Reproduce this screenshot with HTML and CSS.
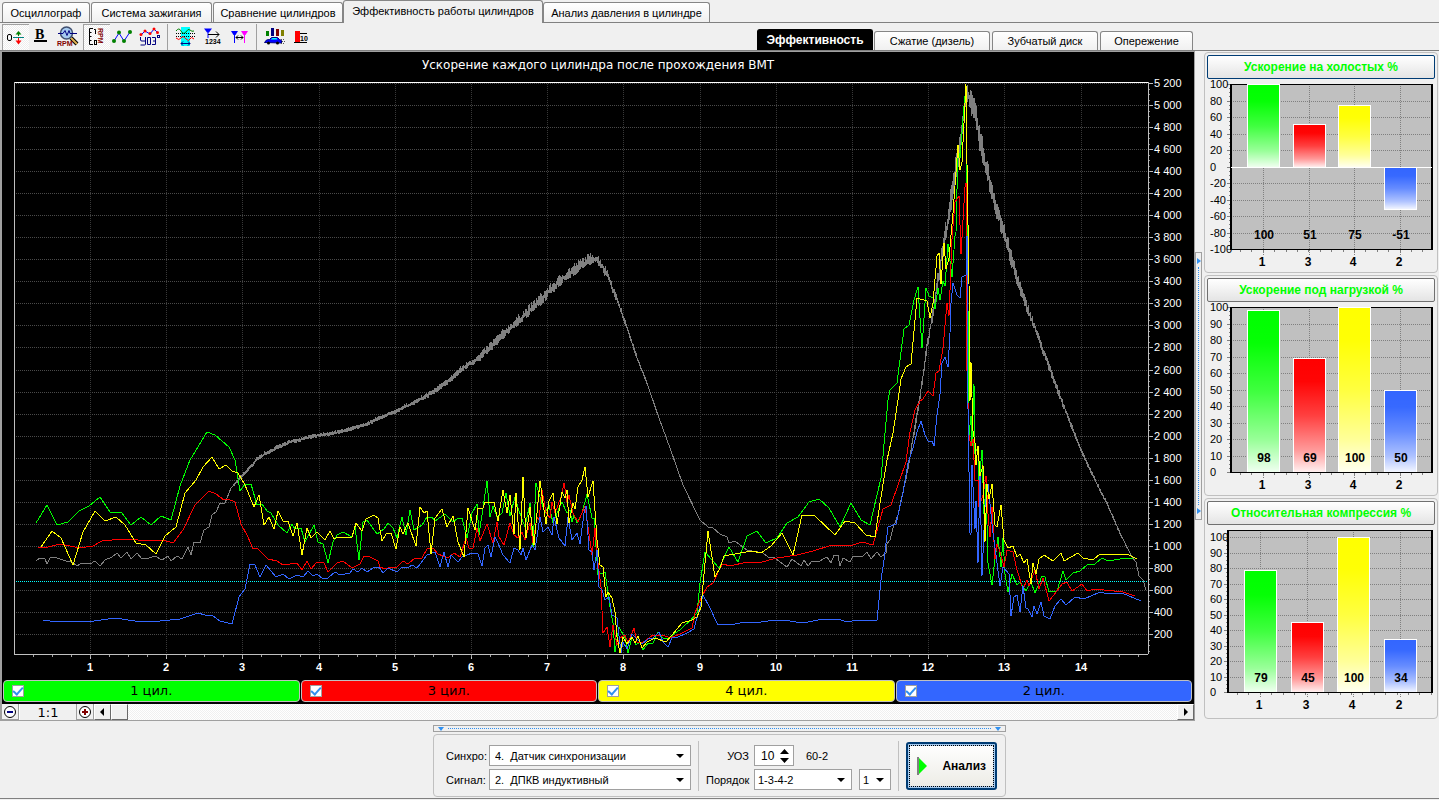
FILE: index.html
```html
<!DOCTYPE html>
<html lang="ru">
<head>
<meta charset="utf-8">
<title>Эффективность работы цилиндров</title>
<link rel="stylesheet" href="styles.css">
</head>
<body>
<nav class="tabs main-tabs">
  <button class="tab t-osc">Осциллограф</button>
  <button class="tab t-ign">Система зажигания</button>
  <button class="tab t-cmp">Сравнение цилиндров</button>
  <button class="tab t-eff active">Эффективность работы цилиндров</button>
  <button class="tab t-prs">Анализ давления в цилиндре</button>
</nav>

<header class="toolbar">
  <div class="tools">
    <button class="tool pressed" aria-label="Ноль"><svg viewBox="0 0 27 26"><rect x="5.500" y="10.500" width="4" height="6" rx="1.500" fill="none" stroke="#000"/><path d="M11 13.500h11" stroke="#008080"/><path d="M16.500 8v4" stroke="#008000"/><path d="M13.500 10.500h6l-3-3.500z" fill="#008000"/><path d="M16.500 14v4" stroke="red"/><path d="M13.500 16.500h6l-3 4z" fill="red"/></svg></button>
    <button class="tool" aria-label="Толщина"><svg viewBox="0 0 27 26"><text x="6" y="15" class="ico-b">B</text><path d="M5 17h13" stroke="#000" stroke-width="2"/></svg></button>
    <button class="tool" aria-label="Поиск RPM"><svg viewBox="0 0 27 26"><path d="M15 14l6 6" stroke="#000" stroke-width="4"/><path d="M15 14l6 6" stroke="#e0b050" stroke-width="2"/><circle cx="10.500" cy="9" r="6" fill="#a6caf0" stroke="#405070" stroke-width="1.500"/><path d="M2 9.500h5l2-3 2 5 2-5 1 3h7" stroke="#000080" fill="none"/><text x="1" y="22" class="ico-s maroon">RPM</text></svg></button>
    <button class="tool pressed" aria-label="Шкала RPM"><svg viewBox="0 0 27 26"><path d="M10 4.500H6.500v16H10M6.500 8.500h2M6.500 12.500h2M6.500 16.500h2" stroke="#000" fill="none"/><path d="M11 5.500h1.500V10" stroke="#000" fill="none"/><rect x="11.500" y="16.500" width="2" height="4" fill="none" stroke="#000"/><text transform="translate(15 4) rotate(90)" class="ico-s maroon">RPM</text></svg></button>
    <button class="tool" aria-label="Точки"><svg viewBox="0 0 27 26"><path d="M4 17l5-8 5 8 6-9" stroke="#00f" fill="none"/><g fill="#008000"><circle cx="4" cy="17" r="2"/><circle cx="9" cy="8.500" r="2"/><circle cx="14" cy="17" r="2"/><circle cx="20" cy="8" r="2"/></g></svg></button>
    <button class="tool" aria-label="УОЗ"><svg viewBox="0 0 27 26"><path d="M4 11l4-4 5 3 4-5 4 4" stroke="#00f" fill="none"/><g fill="red"><circle cx="4" cy="10.500" r="1.500"/><circle cx="8" cy="7" r="1.500"/><circle cx="13" cy="9.500" r="1.500"/><circle cx="17" cy="5" r="1.500"/><circle cx="20.500" cy="8.500" r="1.500"/></g><path d="M3.500 13v3q0 1 1.500 1h3M8.500 13v7q0 1-1 1h-4M10.500 13.500h3v7h-3zM15 13.500h3.500v7H15M16 17h2.500" stroke="#000080" fill="none"/><rect x="20.500" y="11.500" width="2" height="2" fill="none" stroke="#000080"/></svg></button>
    <span class="sep"></span>
    <button class="tool" aria-label="Фаза"><svg viewBox="0 0 27 26"><rect x="9" y="3" width="9" height="19" fill="#0ff"/><path d="M4 7q3-4 5 0t5 1q2-4 4-2t4 1" stroke="#008000" fill="none"/><path d="M4 9.500h19M4 12.500h19" stroke="#000" stroke-dasharray="1 1"/><path d="M4 14q3 3 5 0t5 1q3 3 4 0t4 0" stroke="red" fill="none"/><path d="M9 19.500h9M11 17.500l-2 2 2 2M16 17.500l2 2-2 2" stroke="#000080" fill="none"/></svg></button>
    <button class="tool" aria-label="Порядок цилиндров"><svg viewBox="0 0 27 26"><path d="M5 4.500h8l-3 4h-2z" fill="#00f"/><path d="M9 5v9" stroke="#00f"/><path d="M9 10.500h11M17 7.500l3 3-3 3" stroke="#000" fill="none"/><text x="6" y="20" class="ico-s">1234</text></svg></button>
    <button class="tool" aria-label="Интервал"><svg viewBox="0 0 27 26"><path d="M5 7h7l-2.500 4h-2z" fill="#00f"/><path d="M8.500 9v10" stroke="#00f"/><path d="M15 7h7l-2.500 4h-2z" fill="#f0f"/><path d="M18.500 9v10" stroke="#f0f"/><path d="M10 13.500h7M12 11.500l-2 2 2 2M15 11.500l2 2-2 2" stroke="#000" fill="none"/></svg></button>
    <span class="sep"></span>
    <button class="tool" aria-label="Автомобиль"><svg viewBox="0 0 27 26"><rect x="5" y="7" width="3" height="5" fill="#008000"/><rect x="10" y="4" width="3" height="8" fill="#000080"/><rect x="15" y="5" width="3" height="7" fill="#800000"/><rect x="20" y="6" width="3" height="6" fill="#808000"/><path d="M3.500 18.500l2-2.500 3-.5 2-2h6l2 2 2 1v2.500z" fill="#00f" stroke="#000080"/><path d="M9.500 15.500l2-1.500h4l1 1.500z" fill="#0ff"/><circle cx="7.500" cy="19" r="1.500"/><circle cx="16.500" cy="19" r="1.500"/><path d="M20 15.500h4M21 17.500h3M20 19.500h4" stroke="#555" stroke-dasharray="1 1"/></svg></button>
    <button class="tool" aria-label="Уровень"><svg viewBox="0 0 27 26"><rect x="7" y="7" width="5" height="11" fill="red"/><path d="M6 18.500h13M12 9.500h7" stroke="#000"/><text x="12" y="17" class="ico-s">10</text></svg></button>
  </div>
  <nav class="tabs sub-tabs">
    <button class="tab s-eff black">Эффективность</button>
    <button class="tab s-dsl">Сжатие (дизель)</button>
    <button class="tab s-dsk">Зубчатый диск</button>
    <button class="tab s-adv">Опережение</button>
  </nav>
</header>

<main class="workspace">
  <section class="plot-pane">
    <svg class="plot" id="plot" viewBox="2 52 1192 627" shape-rendering="crispEdges">
      <text x="598" y="69" class="plot-title">Ускорение каждого цилиндра после прохождения ВМТ</text>
    </svg>
    <div class="legend">
      <label class="key green"><input type="checkbox" checked><span>1 цил.</span></label>
      <label class="key red"><input type="checkbox" checked><span>3 цил.</span></label>
      <label class="key yellow"><input type="checkbox" checked><span>4 цил.</span></label>
      <label class="key blue"><input type="checkbox" checked><span>2 цил.</span></label>
    </div>
    <div class="scrollrow">
      <button class="zoom-btn" aria-label="Уменьшить"><svg viewBox="0 0 16 16"><circle cx="8" cy="8" r="5.500" fill="#fff" stroke="#000"/><path d="M5 8h6" stroke="#000080" stroke-width="2"/></svg></button>
      <span class="ratio">1:1</span>
      <button class="zoom-btn" aria-label="Увеличить"><svg viewBox="0 0 16 16"><circle cx="8" cy="8" r="5.500" fill="#fff" stroke="#000"/><path d="M5 8h6M8 5v6" stroke="#800000" stroke-width="2"/></svg></button>
      <button class="raised" aria-label="Влево"><svg viewBox="0 0 16 16"><path d="M9 3v8L5 7z"/></svg></button>
      <span class="raised thumb"></span>
      <span class="track"></span>
      <button class="raised" aria-label="Вправо"><svg viewBox="0 0 16 16"><path d="M6 3v8l4-4z"/></svg></button>
    </div>
  </section>

  <div class="vsplit"><div class="vgrip"><i></i><b></b><i></i></div></div>

  <aside class="bars">
    <section class="card"><button class="bar-btn focus">Ускорение на холостых %</button><svg class="bar-chart" id="idle" viewBox="1205 79 232 193" shape-rendering="crispEdges"></svg></section>
    <section class="card"><button class="bar-btn">Ускорение под нагрузкой %</button><svg class="bar-chart" id="load" viewBox="1205 302 232 193" shape-rendering="crispEdges"></svg></section>
    <section class="card"><button class="bar-btn">Относительная компрессия %</button><svg class="bar-chart" id="comp" viewBox="1205 525 232 193" shape-rendering="crispEdges"></svg></section>
  </aside>
</main>

<footer class="bottom">
  <div class="dock">
    <div class="hgrip"><i></i><b></b><i></i></div>
    <form class="panel">
      <div class="fields source">
        <label for="sync">Синхро:</label>
        <span class="pick"><select id="sync"><option>4.&nbsp; Датчик синхронизации</option></select></span>
        <label for="signal">Сигнал:</label>
        <span class="pick"><select id="signal"><option>2.&nbsp; ДПКВ индуктивный</option></select></span>
      </div>
      <span class="rule"></span>
      <div class="fields order">
        <label for="uoz" class="right">УОЗ</label>
        <div class="line"><span class="spin"><input id="uoz" type="text" value="10"><svg viewBox="0 0 9 14"><path d="M4.500 0L9 5H0zM0 9h9l-4.500 5z"/></svg></span><span class="disk">60-2</span></div>
        <label for="order">Порядок</label>
        <div class="line"><span class="pick seq"><select id="order"><option>1-3-4-2</option></select></span><span class="pick first"><select aria-label="Первый цилиндр"><option>1</option></select></span></div>
      </div>
      <span class="rule"></span>
      <button type="button" class="analyze"><svg viewBox="0 0 11 20"><path d="M1 1l9 9-9 9z" fill="#0f0"/><path d="M1 1v18" stroke="#808080" stroke-width="2"/></svg>Анализ</button>
    </form>
  </div>
</footer>
<script src="charts.js"></script>
</body>
</html>
```
FILE: styles.css
```css
* { box-sizing: border-box; }
body {
  margin: 0;
  min-height: 100vh;
  display: flex;
  flex-direction: column;
  background: #f0f0f0;
  color: #000;
  font: 12px/14px "Liberation Sans", Arial, sans-serif;
}
button, input, select { font: inherit; color: inherit; margin: 0; }
button { padding: 0; border: 0; background: none; white-space: nowrap; }
svg { display: block; }

.tabs { display: flex; align-items: flex-end; }
.tab {
  height: 20px;
  border: 1px solid #868686;
  border-bottom: 0;
  border-radius: 3px 3px 0 0;
  background: linear-gradient(#fff, #f0f0f0);
  font-size: 11px;
}
.main-tabs { height: 23px; padding-left: 2px; border-bottom: 1px solid #808080; }
.main-tabs .tab { height: 20px; }
.main-tabs .tab.active { height: 23px; background: #f0f0f0; margin-bottom: -1px; padding-bottom: 2px; }
.t-osc { width: 88px; margin-right: 1px; }
.t-ign { width: 121px; margin-right: 1px; }
.t-cmp { width: 130px; }
.t-eff { width: 200px; }
.t-prs { width: 167px; }

.toolbar { display: flex; justify-content: space-between; align-items: flex-end; height: 27px; padding: 0 246px 0 2px; }
.tools { display: flex; align-self: stretch; padding-top: 1px; }
.tool { width: 27px; height: 26px; }
.tool svg { width: 27px; height: 26px; }
.pressed { background: repeating-conic-gradient(#fff 0 25%, #eee 0 50%) 0 0 / 2px 2px; box-shadow: inset 1px 1px #a0a0a0; }
.sep { width: 8px; height: 26px; border-right: 4px solid transparent; box-shadow: inset -1px 0 #a0a0a0; }
.ico-b { font: bold 14px "Liberation Serif", serif; }
.ico-s { font: bold 7px "Liberation Sans", sans-serif; }
.maroon { fill: #800000; }
.sub-tabs { gap: 2px; }
.sub-tabs .tab { height: 19px; }
.sub-tabs .tab.black { height: 21px; background: #000; color: #fff; font-weight: bold; font-size: 12px; border-color: #000; margin-right: -1px; }
.s-eff { width: 116px; }
.s-dsl { width: 116px; }
.s-dsk { width: 106px; }
.s-adv { width: 93px; }

.workspace { display: flex; flex: 1; border-top: 1px solid #808080; }
.plot-pane {
  flex: 1;
  min-width: 0;
  display: flex;
  flex-direction: column;
  border: solid #a0a0a0;
  border-width: 1px 1px 1px 2px;
}
.plot { width: 100%; flex: 1; background: #000; }
.plot-title { font: 12px "DejaVu Sans", Verdana, sans-serif; fill: #fff; text-anchor: middle; }
.y-label { font: 11px "Liberation Sans", Arial, sans-serif; fill: #fff; }
.x-label { font: bold 11px "Liberation Sans", Arial, sans-serif; fill: #fff; text-anchor: middle; }
.legend { display: flex; gap: 1px; padding: 1px 2px 2px 1px; background: #000; }
.key {
  flex: 1;
  height: 22px;
  display: flex;
  align-items: center;
  padding: 0 8px;
  border: 1px solid #c0c0c0;
  border-radius: 4px;
  font: 13px/16px "DejaVu Sans", Verdana, sans-serif;
}
.key span { flex: 1; text-align: center; padding-right: 12px; }
.key input { appearance: none; width: 12px; height: 12px; border: 1px solid #a0a0a0; background: #fff; display: grid; place-items: center; }
.key input:checked::after { content: ""; width: 8px; height: 4px; border: solid #3090f0; border-width: 0 0 2px 2px; transform: rotate(-48deg); margin-bottom: 3px; }
.green { background: #0f0; }
.red { background: #f00; }
.yellow { background: #ff0; }
.blue { background: #36f; }

.scrollrow { display: flex; height: 16px; background: #f0f0f0; }
.scrollrow svg { width: 16px; height: 16px; }
.zoom-btn { width: 17px; border-right: 1px solid #a0a0a0; border-bottom: 1px solid #a0a0a0; }
.ratio { width: 58px; text-align: center; font: 13px/18px "DejaVu Sans", Verdana, sans-serif; overflow: hidden; border-right: 1px solid #a0a0a0; border-left: 1px solid #fff; }
.raised { width: 17px; border: 1px solid #fff; border-right-color: #696969; border-bottom-color: #696969; background: #f0f0f0; }
.track { flex: 1; background: repeating-conic-gradient(#fff 0 25%, #f0f0f0 0 50%) 0 0 / 2px 2px; }

.vsplit { width: 9px; display: flex; align-items: center; padding-bottom: 1px; }
.vgrip { width: 7px; height: 268px; border: 1px solid #a0a0a0; display: flex; flex-direction: column; align-items: center; padding: 5px 0; gap: 3px; }
.vgrip i { border: 3px solid transparent; border-left: 4px solid #3090f0; border-right: 0; }
.vgrip b { flex: 1; border-left: 1px dotted #3090f0; }

.bars { width: 235px; display: flex; flex-direction: column; gap: 2px; padding: 1px 1px 2px 0; }
.card { flex: 1; display: flex; flex-direction: column; border: 1px solid #c0c0c0; border-radius: 4px; padding: 2px 0 0; }
.bar-btn {
  height: 24px;
  margin: 0 2px;
  border: 1px solid #707070;
  border-radius: 2px;
  background: linear-gradient(#fff, #e4e4e4);
  color: #0f0;
  font-weight: bold;
  font-size: 12px;
}
.bar-btn.focus { border-color: #003c74; }
.bar-chart { width: 100%; flex: 1; }
.scale { font: 11px "Liberation Sans", Arial, sans-serif; }
.value { font: bold 12px "Liberation Sans", Arial, sans-serif; text-anchor: middle; }

.bottom { display: flex; justify-content: center; height: 78px; border-bottom: 1px solid #808080; margin-bottom: 1px; }
.dock { width: 573px; display: flex; flex-direction: column; gap: 2px; padding: 4px 0 1px; }
.hgrip { height: 7px; border: 1px solid #a0a0a0; display: flex; align-items: center; padding: 0 4px; gap: 4px; }
.hgrip i { border: 3px solid transparent; border-top: 4px solid #3090f0; border-bottom: 0; }
.hgrip b { flex: 1; border-top: 1px dotted #3090f0; }
.panel { flex: 1; display: flex; align-items: center; border: 1px solid #c0c0c0; border-radius: 4px; padding: 0 7px 0 12px; font-size: 11px; }
.fields { display: grid; row-gap: 3px; align-items: center; padding-top: 4px; }
.source { grid-template-columns: 43px 202px; }
.order { grid-template-columns: 48px 137px; }
.right { text-align: right; padding-right: 5px; }
.line { display: flex; align-items: center; gap: 7px; }
.rule { width: 1px; height: 50px; background: #c0c0c0; margin: 0 7px; }
.pick { position: relative; display: block; height: 21px; }
.pick select { appearance: none; width: 100%; height: 100%; border: 1px solid #a0a0a0; border-radius: 0; background: #fff; padding: 0 5px; }
.pick::after { content: ""; position: absolute; right: 7px; top: 9px; border: 4px solid transparent; border-top: 4px solid #000; border-bottom: 0; }
.seq { width: 98px; }
.first { width: 32px; }
.order select { padding: 0 3px; }
.spin { display: flex; align-items: center; width: 40px; height: 21px; background: #fff; border: 1px solid #a0a0a0; padding-right: 4px; font-size: 12px; }
.spin input { width: 100%; min-width: 0; border: 0; padding: 0 0 0 6px; background: none; }
.spin svg { flex: none; width: 9px; height: 14px; }
.disk { padding-left: 5px; }
.analyze {
  width: 91px;
  height: 48px;
  display: flex;
  align-items: center;
  justify-content: space-between;
  padding: 0 9px;
  border: 2px solid #003c74;
  border-radius: 3px;
  background: linear-gradient(#fff, #ecebe5);
  box-shadow: inset 0 0 0 2px #a8ccf0;
  outline: 1px dotted #000;
  outline-offset: -4px;
  font-weight: bold;
  font-size: 12px;
}
.analyze svg { width: 11px; height: 20px; }
```
FILE: charts.js
```js
const NS = "http://www.w3.org/2000/svg";

function add(parent, name, attrs, text) {
  const el = document.createElementNS(NS, name);
  for (const key in attrs) el.setAttribute(key, attrs[key]);
  if (text !== undefined) el.textContent = text;
  parent.appendChild(el);
  return el;
}
function line(parent, x1, y1, x2, y2, stroke, dash) {
  const attrs = { x1, y1, x2, y2, stroke };
  if (dash) attrs["stroke-dasharray"] = dash;
  add(parent, "line", attrs);
}

/* ---------- acceleration plot ---------- */
const plot = document.getElementById("plot");
const left = 14, right = 1148, top_ = 82, bottom = 654;
const yOf = v => Math.round(634 - (v - 200) * 0.1102);
const xOf = n => Math.round(90 + (n - 1) * 76.2);

for (let v = 200; v <= 5200; v += 200) {
  line(plot, left, yOf(v) + .5, right, yOf(v) + .5, "#4a4a4a", "1 1");
  line(plot, right, yOf(v) + .5, right + 5, yOf(v) + .5, "#c0c0c0");
  const s = String(v);
  add(plot, "text", { x: 1154, y: yOf(v) + 4, class: "y-label" }, s.length > 3 ? s[0] + " " + s.slice(1) : s);
}
for (let v = 50; v < 5200; v += 50) line(plot, right, yOf(v) + .5, right + 2, yOf(v) + .5, "#909090");
for (let n = 1; n <= 14; n++) {
  line(plot, xOf(n) + .5, top_, xOf(n) + .5, bottom, "#383838", "1 1");
  line(plot, xOf(n) + .5, bottom, xOf(n) + .5, bottom + 5, "#c0c0c0");
  add(plot, "text", { x: xOf(n), y: 671, class: "x-label" }, n);
}
for (let n = .25; n < 15; n += .25) line(plot, xOf(n) + .5, bottom, xOf(n) + .5, bottom + 3, "#a0a0a0");
line(plot, left, 581.5, right, 581.5, "#00ffff", "1 1");

/* x, y, half height of the noise band */
const speed = [36,561,0,40,558,0,45,559,0,47,564,0,50,558,0,54,557,0,60,559,0,66,561,0,72,562,0,77,566,0,82,563,0,90,564,0,95,561,0,100,566,0,105,560,0,112,557,0,117,553,0,121,558,0,127,552,0,131,559,0,137,553,0,142,559,0,149,558,0,155,556,0,162,560,0,168,556,0,171,561,0,177,556,0,182,559,0,188,547,0,191,555,0,194,542,0,200,543,0,204,530,0,209,527,0,212,515,0,216,512,0,220,503,0,225,503,0,231,488,0,236,483,2,241,477,2,246,472,2,252,465,2,258,458,2,264,455,2,270,451,2,280,446,2,290,442,2,300,440,2,310,437,2,320,435,2,335,433,2,350,429,2,365,425,2,380,418,2,397,411,2,413,403,2,430,394,3,447,382,3,463,368,4,480,357,4,497,340,5,513,325,5,530,310,6,547,293,6,563,278,6,580,265,6,592,258,6,598,260,5,608,275,5,618,302,4,627,327,2,637,357,2,647,383,1,657,412,1,670,448,0,683,485,0,700,520,0,708,527,0,713,528,0,720,534,0,727,537,0,729,543,0,735,541,0,747,550,0,763,553,0,768,557,0,775,558,0,780,562,0,787,567,0,792,559,0,801,566,0,804,560,0,808,566,0,812,561,0,818,562,0,827,557,0,831,563,0,834,555,0,838,555,0,840,566,0,843,558,0,850,562,0,853,556,0,862,557,0,867,552,0,871,559,0,877,552,0,881,557,0,886,553,0,887,544,0,890,540,0,893,528,0,898,515,0,901,500,2,907,473,3,913,437,4,920,396,4,927,345,5,933,311,7,940,266,9,947,224,11,953,187,13,960,141,14,966,98,12,968,92,8,975,113,13,983,153,13,993,194,11,1007,243,9,1023,296,6,1040,341,4,1053,377,4,1067,414,3,1082,452,2,1100,490,1,1107,503,1,1120,533,1,1132,557,0,1136,562,0,1139,576,0,1143,580,0,1146,590,0];
let seed = 7;
const noise = () => (seed = (seed * 16807) % 2147483647) / 2147483647;
const pts = [];
for (let i = 0; i + 3 < speed.length; i += 3) {
  const [x1, y1, a1, x2, y2, a2] = speed.slice(i, i + 6);
  const step = a1 + a2 > 0 ? .5 : x2 - x1;
  for (let x = x1; x < x2; x += step) {
    const t = (x - x1) / (x2 - x1), amp = a1 + (a2 - a1) * t;
    const side = pts.length % 2 ? 1 : -1;
    pts.push(x + "," + (y1 + (y2 - y1) * t + side * amp * (.1 + noise())).toFixed(1));
  }
}
pts.push("1146,590");
add(plot, "polyline", { points: pts.join(" "), fill: "none", stroke: "#808080" });

const series = {
  "#00ff00": "36,523 47,505 57,525 68,522 79,511 89,506 100,497 110,512 121,512 131,525 141,517 151,525 161,516 171,520 180,486 190,460 207,432 215,435 229,447 235,460 240,491 245,484 251,484 257,505 262,504 267,511 271,513 278,525 287,533 292,524 295,529 301,528 305,542 314,525 318,542 323,544 328,563 333,542 337,535 343,532 352,537 355,527 359,560 363,522 367,520 377,534 384,529 388,523 393,528 397,538 402,517 406,535 410,510 414,530 422,525 427,517 432,517 435,521 445,514 453,522 458,518 462,518 467,538 472,513 477,504 479,535 487,481 490,517 493,506 497,517 502,513 506,493 510,516 515,497 518,508 525,527 530,503 533,547 536,483 540,497 545,513 549,505 553,523 557,513 562,502 567,513 570,510 572,522 574,515 577,523 582,513 587,494 592,518 594,518 598,575 605,572 610,607 613,623 615,652 619,627 625,638 628,653 632,637 636,645 640,642 643,650 648,643 653,643 658,632 663,638 670,638 675,633 680,630 685,625 690,621 697,613 700,583 705,552 712,560 719,568 729,547 738,562 747,536 757,531 766,543 777,538 787,523 798,517 809,502 819,499 829,508 840,527 851,503 861,520 870,525 881,478 888,400 890,390 897,383 904,329 909,325 914,300 918,287 922,348 926,288 929,296 933,298 935,309 938,288 940,300 943,281 945,286 948,244 952,277 955,236 956,232 958,147 960,158 964,106 966,87 967,183 968,311 969,435 971,416 972,446 974,384 975,454 978,446 979,484 982,450 984,514 986,484 988,563 992,585 995,559 998,537 1001,567 1003,538 1005,574 1008,592 1012,574 1017,585 1020,582 1026,591 1031,582 1035,593 1042,576 1045,577 1049,592 1057,591 1063,571 1066,580 1073,573 1080,571 1087,565 1095,564 1102,558 1108,561 1120,559 1133,558",
  "#ff0000": "38,547 48,547 60,544 80,548 93,546 102,541 112,540 133,539 138,540 163,540 173,543 183,530 195,505 209,491 216,494 224,500 228,499 235,502 241,524 248,537 253,549 257,548 268,559 277,561 283,565 297,563 302,570 307,561 311,569 317,562 324,563 328,572 337,563 343,561 352,568 360,564 364,556 370,557 378,561 380,567 385,569 392,567 397,567 403,561 408,564 415,558 422,558 427,549 433,548 438,554 448,558 454,553 460,557 466,538 469,548 473,548 477,528 480,541 487,524 493,543 497,522 499,537 504,545 510,523 514,535 518,538 522,532 525,540 530,523 533,543 537,517 539,520 542,490 546,512 550,518 552,502 555,513 561,497 564,483 567,502 569,495 573,513 578,522 585,506 588,527 592,555 595,528 598,563 601,587 603,633 607,627 610,647 613,625 617,645 620,638 625,635 628,643 634,628 637,642 642,643 653,635 663,635 670,638 680,634 692,628 695,613 701,598 707,587 713,583 720,568 723,564 730,566 747,562 758,563 777,558 797,555 813,551 832,545 853,545 862,542 873,545 883,509 891,505 906,462 910,432 915,410 920,401 923,399 928,391 933,396 936,373 939,371 943,348 947,303 949,316 952,239 955,202 959,196 961,254 965,187 966,183 967,371 969,435 971,446 973,439 975,480 978,480 979,507 983,495 986,476 988,514 990,537 992,507 995,559 997,544 1000,552 1004,567 1007,550 1013,552 1017,570 1023,589 1027,580 1029,586 1035,570 1039,589 1043,578 1049,601 1057,591 1062,584 1067,582 1072,591 1082,584 1087,591 1095,589 1123,592 1135,596",
  "#3366ff": "43,620 50,621 80,621 87,622 115,618 135,621 160,621 180,619 198,613 205,615 213,616 220,621 232,624 239,597 245,589 250,564 255,565 260,577 266,565 276,577 283,574 289,579 297,575 303,577 308,571 313,576 317,574 323,579 328,578 335,572 340,575 350,573 353,569 358,572 362,568 367,572 373,568 379,567 383,573 388,568 397,572 402,567 408,568 412,565 417,568 427,555 435,552 440,567 444,552 448,567 451,555 458,562 462,557 472,553 478,554 482,566 485,548 488,545 491,557 495,537 498,543 503,555 510,563 514,548 518,550 521,555 523,548 526,560 532,545 535,550 540,517 543,532 548,527 552,535 554,517 559,538 565,546 568,517 572,540 577,533 580,544 584,513 586,506 589,550 592,552 594,570 597,550 599,587 602,590 605,600 609,597 612,615 617,618 621,653 623,642 627,649 632,634 642,644 648,639 653,638 659,632 663,642 668,647 672,638 678,637 687,633 694,629 703,595 710,608 717,623 718,625 735,624 745,622 755,623 768,621 783,620 803,623 823,619 838,619 847,622 857,620 877,620 881,580 884,560 888,527 896,524 903,493 908,463 913,448 917,432 921,421 925,435 928,441 932,441 934,446 937,415 940,394 942,363 945,357 948,367 950,333 951,303 953,283 957,295 960,298 962,277 966,275 967,236 968,409 970,533 971,535 972,465 975,529 976,501 978,563 980,473 982,576 985,507 988,484 991,514 993,533 996,555 1000,586 1003,567 1009,574 1011,616 1014,597 1017,595 1020,612 1023,586 1026,608 1028,609 1032,617 1034,606 1037,614 1041,602 1044,616 1050,619 1055,606 1061,599 1066,605 1075,597 1084,599 1100,592 1108,594 1122,593 1141,601",
  "#ffff00": "41,547 52,531 61,538 73,565 83,532 95,511 105,521 116,517 125,525 136,543 146,545 156,554 165,536 176,527 185,493 196,480 203,467 212,457 219,469 226,465 232,471 238,473 245,485 254,507 259,495 264,525 269,517 274,529 278,511 283,521 288,521 293,536 297,523 302,555 307,528 311,538 317,532 325,540 330,531 334,539 338,537 352,537 356,523 362,531 366,519 374,515 378,518 382,541 386,534 391,533 396,549 400,527 403,534 408,523 416,546 420,507 424,513 427,511 431,554 435,518 442,509 447,527 453,516 458,542 464,557 468,508 475,530 478,508 483,508 485,502 494,502 498,521 503,490 507,513 510,495 514,534 516,493 520,550 523,477 526,538 530,507 534,545 540,481 546,524 549,501 553,493 557,524 562,492 565,498 567,490 569,523 573,503 575,509 578,487 582,480 585,467 588,497 593,481 597,540 600,565 603,567 606,597 608,592 612,598 615,612 617,637 620,653 623,637 627,644 632,637 635,643 638,636 642,648 647,642 655,638 666,642 672,635 682,623 692,620 697,617 701,607 708,531 715,577 720,568 724,556 740,553 752,551 761,553 771,546 782,533 793,555 802,515 814,515 835,535 845,521 855,523 866,535 875,537 880,503 887,460 893,433 898,400 901,379 906,367 911,364 917,298 927,301 930,318 933,303 937,256 939,253 941,284 944,243 946,269 949,258 953,213 958,145 960,170 962,162 966,84 967,164 969,284 970,401 971,362 973,431 975,443 976,465 978,446 980,476 983,465 985,542 987,484 989,499 992,484 995,525 997,527 1001,505 1004,540 1008,548 1013,546 1017,557 1020,554 1024,563 1027,559 1031,584 1033,563 1036,574 1039,559 1044,555 1053,561 1061,553 1064,561 1078,553 1083,558 1093,560 1100,554 1120,555 1127,554 1137,559"
};
for (const color in series) add(plot, "polyline", { points: series[color], fill: "none", stroke: color });

line(plot, left, 82.5, right, 82.5, "#ffffff");
line(plot, right + .5, top_, right + .5, bottom, "#c0c0c0");
line(plot, left + .5, top_, left + .5, bottom, "#c0c0c0");
line(plot, left, bottom + .5, right, bottom + .5, "#c0c0c0");

/* ---------- bar charts ---------- */
const colors = ["#00ff00", "#ff0000", "#ffff00", "#3366ff"];
const names = [1, 3, 4, 2];

function bars(id, c) {
  const svg = document.getElementById(id), r = 1432;
  const y = v => Math.round(c.y0 - (v - c.min) * c.k);
  add(svg, "rect", { x: c.left, y: c.top, width: r - c.left, height: c.bottom - c.top, fill: "#c0c0c0" });
  const defs = add(svg, "defs", {});
  for (let v = c.min; v <= 100; v += c.step) {
    line(svg, c.left, y(v) + .5, r, y(v) + .5, "#808080", "1 1");
    line(svg, c.left - 4, y(v) + .5, c.left, y(v) + .5, "#808080");
    for (let m = 1; m < 4; m++) if (v < 100) line(svg, c.left - 2, y(v + c.step * m / 4) + .5, c.left, y(v + c.step * m / 4) + .5, "#808080");
    add(svg, "text", { x: 1210, y: y(v) + 4, class: "scale" }, v);
  }
  for (const cx of c.centers) line(svg, cx + .5, c.top, cx + .5, c.bottom + 6, "#808080", "1 1");
  line(svg, c.left, c.top + .5, r, c.top + .5, "#000");
  line(svg, c.left, c.bottom + .5, r, c.bottom + .5, "#000");
  add(svg, "rect", { x: c.left - 1, y: c.top, width: 2, height: c.bottom - c.top + 1, fill: "#000" });
  add(svg, "rect", { x: r - 1, y: c.top, width: 2, height: c.bottom - c.top + 1, fill: "#000" });
  for (let t = c.left + 9; t < r; t += 11.4) line(svg, Math.round(t) + .5, c.bottom + 1, Math.round(t) + .5, c.bottom + 3, "#808080");
  c.values.forEach((v, i) => {
    const g = add(defs, "linearGradient", { id: id + i, x1: 0, y1: 0, x2: 0, y2: 1 });
    for (const [offset, white] of [[0, 0], [.2, .02], [.5, .25], [.8, .6], [1, .95]])
      add(g, "stop", { offset, "stop-color": "#fff", "stop-opacity": white });
    const a = Math.min(y(v), y(0)), h = Math.abs(y(v) - y(0));
    const box = { x: c.centers[i] - 15.5, y: a + .5, width: 32, height: h };
    add(svg, "rect", { ...box, fill: colors[i] });
    add(svg, "rect", { ...box, fill: `url(#${id + i})`, stroke: "#fff" });
    add(svg, "text", { x: c.centers[i] + 1, y: c.bottom - 10, class: "value" }, v);
    add(svg, "text", { x: c.centers[i] - 1, y: c.bottom + 17, class: "value" }, names[i]);
  });
  line(svg, c.left, y(0) + .5, r, y(0) + .5, c.min < 0 ? "#fff" : "#000");
}
bars("idle", { left: 1231, top: 84, bottom: 249, min: -100, step: 20, y0: 249, k: .825, centers: [1263, 1309, 1354, 1400], values: [100, 51, 75, -51] });
bars("load", { left: 1231, top: 307, bottom: 472, min: 0, step: 10, y0: 472, k: 1.65, centers: [1263, 1309, 1354, 1400], values: [98, 69, 100, 50] });
bars("comp", { left: 1228, top: 530, bottom: 692, min: 0, step: 10, y0: 692, k: 1.55, centers: [1260, 1307, 1353, 1400], values: [79, 45, 100, 34] });
```
